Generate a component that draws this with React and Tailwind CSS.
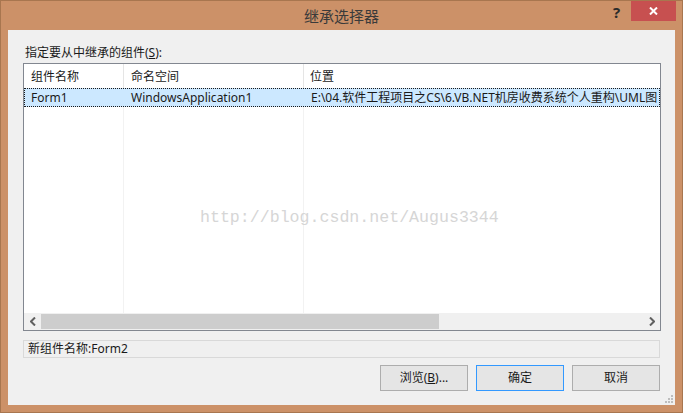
import React from 'react';

const font = { fontFamily: '"Noto Sans", "Noto Sans CJK SC", sans-serif' };

function Button({ children, primary }) {
    return (
        <button
            className={
                primary
                    ? 'w-[88px] h-[26px] border border-[#3399ff] bg-[#e5e5e5] text-[12px] text-[#1a1a1a] leading-none'
                    : 'w-[88px] h-[26px] border border-[#adadad] bg-[#e5e5e5] text-[12px] text-[#1a1a1a] leading-none'
            }
        >
            {children}
        </button>
    );
}

function App() {
    return (
        <div className="w-[683px] h-[413px] bg-[#cc9168] border border-[#a8764f] flex flex-col select-none" style={font}>
            {/* title bar */}
            <div className="relative h-[29px] flex items-center justify-center">
                <span className="text-[15px] text-[#3a3a3a] leading-none mt-[2px]">继承选择器</span>
                <span className="absolute left-[612px] top-[4px] text-[15px] font-bold text-[#2b2b2b] leading-none">?</span>
                <div className="absolute left-[630px] top-0 w-[45px] h-[20px] bg-[#c75050] flex items-center justify-center">
                    <svg width="9" height="8" viewBox="0 0 9 8">
                        <path d="M1 0.5 L8 7.5 M8 0.5 L1 7.5" stroke="white" strokeWidth="2" />
                    </svg>
                </div>
            </div>

            {/* client area */}
            <div className="mx-[7px] mb-[7px] flex-1 bg-[#f0f0f0] pl-[15px] pr-[14px] flex flex-col relative">
                <div className="h-[33px] pt-[15px] pl-[2px] text-[12px] leading-[16px] text-[#1a1a1a]">
                    指定要从中继承的组件(<u>S</u>):
                </div>

                {/* list view */}
                <div className="relative h-[268px] border border-[#828790] bg-white flex flex-col text-[12px] text-[#1a1a1a] overflow-hidden">
                    <div className="flex h-[24px] shrink-0">
                        <div className="w-[100px] border-r border-[#e5e5e5] pl-[7px] flex items-center pt-[2px]">组件名称</div>
                        <div className="w-[180px] border-r border-[#e5e5e5] pl-[7px] flex items-center pt-[2px]">命名空间</div>
                        <div className="flex-1 pl-[6px] flex items-center pt-[2px]">位置</div>
                    </div>
                    <div className="flex h-[19px] shrink-0 bg-[#cce8ff] border border-dotted border-[#1a1a1a] whitespace-nowrap overflow-hidden">
                        <div className="w-[100px] shrink-0 pl-[6px] flex items-center">Form1</div>
                        <div className="w-[180px] shrink-0 pl-[6px] flex items-center">WindowsApplication1</div>
                        <div className="flex-1 pl-[6px] flex items-center">E:\04.软件工程项目之CS\6.VB.NET机房收费系统个人重构\UML图</div>
                    </div>
                    <div className="flex flex-1">
                        <div className="w-[100px] border-r border-[#f2f2f2]"></div>
                        <div className="w-[180px] border-r border-[#f2f2f2]"></div>
                        <div className="flex-1"></div>
                    </div>

                    {/* horizontal scrollbar */}
                    <div className="h-[17px] shrink-0 bg-[#f0f0f0] flex items-center">
                        <div className="w-[17px] h-full flex items-center justify-center">
                            <svg width="6" height="9" viewBox="0 0 6 9">
                                <path d="M5 0.5 L1 4.5 L5 8.5" stroke="#606060" strokeWidth="2" fill="none" />
                            </svg>
                        </div>
                        <div className="flex-1 h-full flex items-center">
                            <div className="w-[398px] h-[15px] bg-[#cdcdcd]"></div>
                        </div>
                        <div className="w-[17px] h-full flex items-center justify-center">
                            <svg width="6" height="9" viewBox="0 0 6 9">
                                <path d="M1 0.5 L5 4.5 L1 8.5" stroke="#606060" strokeWidth="2" fill="none" />
                            </svg>
                        </div>
                    </div>

                    {/* watermark */}
                    <div
                        className="absolute left-[176px] top-[142px] text-[16.6px] text-[#d6d6d6] whitespace-nowrap pointer-events-none"
                        style={{ fontFamily: '"Liberation Mono", monospace' }}
                    >
                        http://blog.csdn.net/Augus3344
                    </div>
                </div>

                {/* component name box */}
                <div className="mt-[9px] mr-px h-[18px] border border-[#d9d9d9] bg-[#f0f0f0] flex items-center pl-[4px] text-[12px] text-[#1a1a1a]">
                    新组件名称:Form2
                </div>

                <div className="mt-[7px] flex justify-end gap-[8px] mr-px">
                    <Button>浏览(<u>B</u>)...</Button>
                    <Button primary>确定</Button>
                    <Button>取消</Button>
                </div>

                {/* resize grip */}
                <svg className="absolute right-[2px] bottom-[2px]" width="8" height="8" viewBox="0 0 8 8">
                    <rect x="6" y="0" width="2" height="2" fill="#bdbdbd" />
                    <rect x="3" y="3" width="2" height="2" fill="#bdbdbd" />
                    <rect x="6" y="3" width="2" height="2" fill="#bdbdbd" />
                    <rect x="0" y="6" width="2" height="2" fill="#bdbdbd" />
                    <rect x="3" y="6" width="2" height="2" fill="#bdbdbd" />
                    <rect x="6" y="6" width="2" height="2" fill="#bdbdbd" />
                </svg>
            </div>
        </div>
    );
}

export default App;
